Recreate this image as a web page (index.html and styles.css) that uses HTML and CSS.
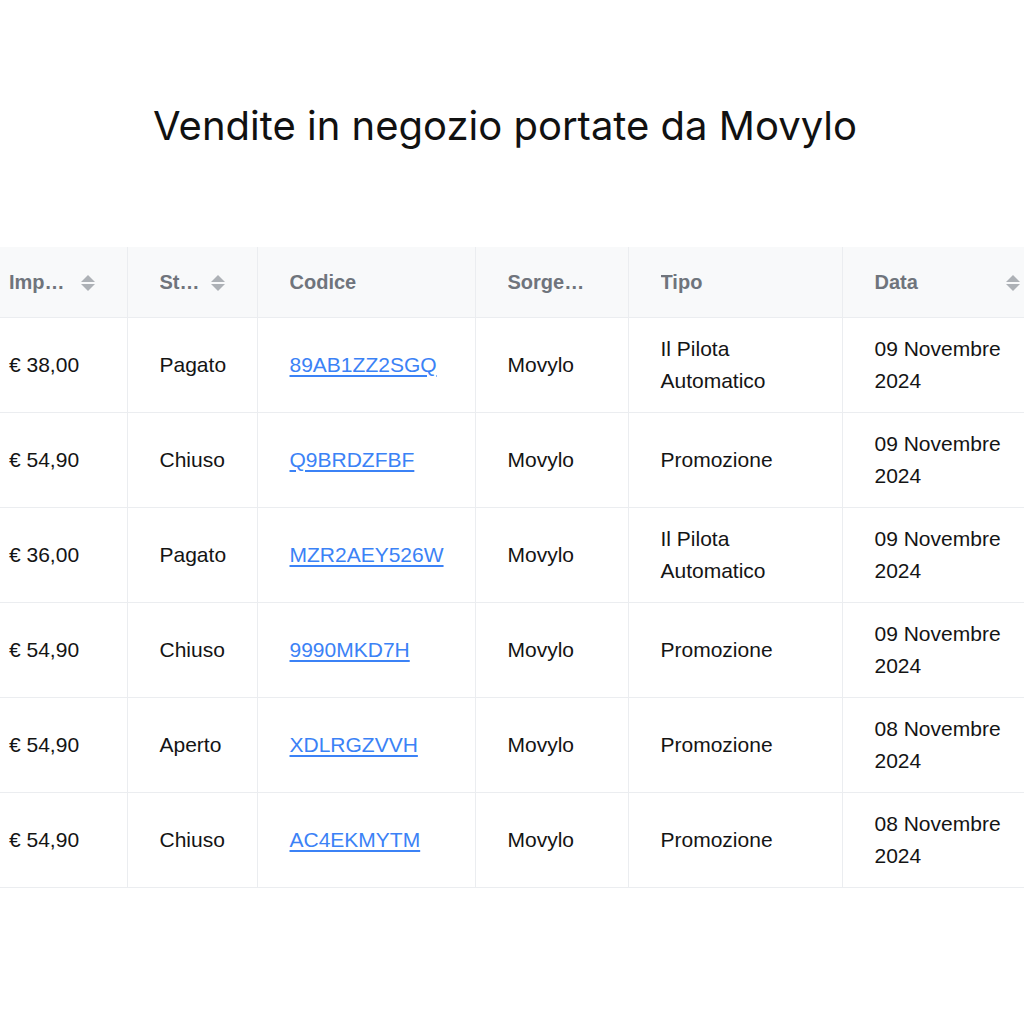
FILE: index.html
```html
<!DOCTYPE html>
<html lang="it">
<head>
<meta charset="utf-8">
<title>Vendite in negozio portate da Movylo</title>
<link rel="stylesheet" href="styles.css">
</head>
<body>
<h1 class="title">Vendite in negozio portate da Movylo</h1>
<div class="table-wrap">
<table class="sales">
  <colgroup>
    <col class="c-imp"><col class="c-stato"><col class="c-codice"><col class="c-sorg"><col class="c-tipo"><col class="c-data">
  </colgroup>
  <thead>
    <tr>
      <th><div class="th-in"><span class="th-label">Importo</span><span class="sort"><i class="up"></i><i class="down"></i></span></div></th>
      <th><div class="th-in"><span class="th-label">Stato</span><span class="sort"><i class="up"></i><i class="down"></i></span></div></th>
      <th><div class="th-in"><span class="th-label">Codice</span></div></th>
      <th class="th-sorg"><div class="th-in"><span class="th-label">Sorgente</span></div></th>
      <th><div class="th-in"><span class="th-label">Tipo</span></div></th>
      <th><div class="th-in"><span class="th-label">Data</span><span class="sort"><i class="up"></i><i class="down"></i></span></div></th>
    </tr>
  </thead>
  <tbody>
    <tr><td>€ 38,00</td><td>Pagato</td><td><a href="#">89AB1ZZ2SGQ</a></td><td>Movylo</td><td>Il Pilota Automatico</td><td>09 Novembre 2024</td></tr>
    <tr><td>€ 54,90</td><td>Chiuso</td><td><a href="#">Q9BRDZFBF</a></td><td>Movylo</td><td>Promozione</td><td>09 Novembre 2024</td></tr>
    <tr><td>€ 36,00</td><td>Pagato</td><td><a href="#">MZR2AEY526W</a></td><td>Movylo</td><td>Il Pilota Automatico</td><td>09 Novembre 2024</td></tr>
    <tr><td>€ 54,90</td><td>Chiuso</td><td><a href="#">9990MKD7H</a></td><td>Movylo</td><td>Promozione</td><td>09 Novembre 2024</td></tr>
    <tr><td>€ 54,90</td><td>Aperto</td><td><a href="#">XDLRGZVVH</a></td><td>Movylo</td><td>Promozione</td><td>08 Novembre 2024</td></tr>
    <tr><td>€ 54,90</td><td>Chiuso</td><td><a href="#">AC4EKMYTM</a></td><td>Movylo</td><td>Promozione</td><td>08 Novembre 2024</td></tr>
  </tbody>
</table>
</div>
</body>
</html>
```
FILE: styles.css
```css
html, body {
  margin: 0;
  padding: 0;
  background: #ffffff;
  overflow: hidden;
}
body {
  width: 1024px;
  height: 1024px;
  font-family: "Liberation Sans", Arial, sans-serif;
}
.title {
  margin: 0;
  padding-top: 102px;
  text-align: center;
  font-family: "Inter", "Noto Sans", sans-serif;
  font-weight: 400;
  font-size: 40px;
  line-height: 48px;
  color: #111111;
  padding-right: 14px;
}
.table-wrap {
  margin-top: 97px;
  margin-left: -23px;
  width: 1075px;
}
.sales {
  border-collapse: collapse;
  table-layout: fixed;
  width: 1075px;
}
.c-imp { width: 150px; }
.c-stato { width: 130px; }
.c-codice { width: 218px; }
.c-sorg { width: 153px; }
.c-tipo { width: 214px; }
.c-data { width: 210px; }

.sales th,
.sales td {
  padding: 0 32px;
  border-left: 1px solid #ebedf0;
  border-bottom: 1px solid #ebedf0;
  text-align: left;
  vertical-align: middle;
}
.sales th:first-child,
.sales td:first-child { border-left: none; }

.sales thead tr { background: #f8f9fa; height: 70px; }
.sales th {
  font-weight: 700;
  font-size: 20px;
  color: #6f747c;
  padding-top: 2px;
}
.sales th.th-sorg { padding-right: 38px; }
.th-in {
  display: flex;
  align-items: center;
  gap: 8px;
}
.th-label {
  flex: 1;
  min-width: 0;
  white-space: nowrap;
  overflow: hidden;
  text-overflow: ellipsis;
}
.sort {
  flex: none;
  display: flex;
  flex-direction: column;
  gap: 2px;
  width: 14px;
  align-items: center;
}
.sort i {
  display: block;
  width: 0;
  height: 0;
  border-left: 7px solid transparent;
  border-right: 7px solid transparent;
}
.sort .up { border-bottom: 7px solid #adb1b6; }
.sort .down { border-top: 7px solid #adb1b6; }

.sales tbody tr { height: 95px; }
.sales td {
  font-size: 21px;
  line-height: 32px;
  color: #141414;
}
.sales td a {
  color: #3b82f6;
  text-decoration: underline;
  text-underline-offset: 3px;
}
```
